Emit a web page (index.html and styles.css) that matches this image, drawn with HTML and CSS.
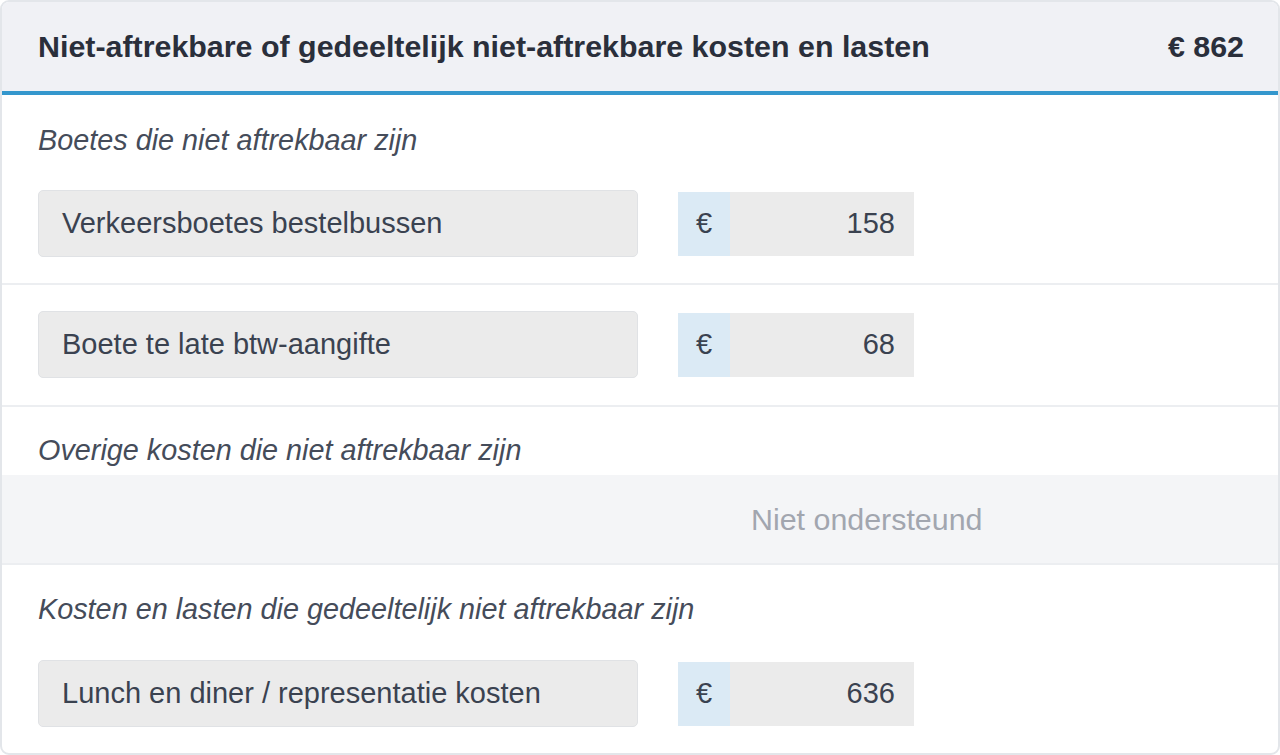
FILE: index.html
```html
<!DOCTYPE html>
<html lang="nl">
<head>
<meta charset="utf-8">
<title>Niet-aftrekbare kosten</title>
<link rel="stylesheet" href="styles.css">
</head>
<body>
<div class="card">
  <div class="card-header">
    <h1 class="title">Niet-aftrekbare of gedeeltelijk niet-aftrekbare kosten en lasten</h1>
    <span class="total">€ 862</span>
  </div>

  <section class="section">
    <div class="label label-first">Boetes die niet aftrekbaar zijn</div>
    <div class="row">
      <div class="field">Verkeersboetes bestelbussen</div>
      <div class="amount"><span class="cur">€</span><span class="val">158</span></div>
    </div>
    <div class="row">
      <div class="field">Boete te late btw-aangifte</div>
      <div class="amount"><span class="cur">€</span><span class="val">68</span></div>
    </div>
  </section>

  <section class="section">
    <div class="label label-second">Overige kosten die niet aftrekbaar zijn</div>
    <div class="unsupported">Niet ondersteund</div>
  </section>

  <section class="section last">
    <div class="label label-third">Kosten en lasten die gedeeltelijk niet aftrekbaar zijn</div>
    <div class="row row-last">
      <div class="field">Lunch en diner / representatie kosten</div>
      <div class="amount"><span class="cur">€</span><span class="val">636</span></div>
    </div>
  </section>
</div>
</body>
</html>
```

FILE: styles.css
```css
* { box-sizing: border-box; }

html, body {
  margin: 0;
  padding: 0;
  background: #ffffff;
}

body {
  font-family: "Liberation Sans", Arial, Helvetica, sans-serif;
  color: #3a4250;
  width: 1280px;
  height: 755px;
  overflow: hidden;
}

.card {
  width: 1280px;
  height: 755px;
  border: 2px solid #e3e6ea;
  border-radius: 9px;
  overflow: hidden;
  background: #ffffff;
  display: flex;
  flex-direction: column;
}

.card-header {
  height: 93px;
  background: #f0f1f5;
  border-bottom: 4px solid #3497cd;
  display: flex;
  align-items: center;
  justify-content: space-between;
  padding: 0 34px 0 36px;
}

.title {
  margin: 0;
  font-size: 30.4px;
  font-weight: 700;
  color: #2a2f3b;
  line-height: 1;
}

.total {
  font-size: 30.4px;
  font-weight: 700;
  color: #2a2f3b;
  line-height: 1;
}

.section {
  border-bottom: 2px solid #eceef1;
}

.section.last {
  border-bottom: none;
}

.label {
  font-style: italic;
  font-size: 28.8px;
  line-height: 38px;
  color: #454c5a;
  padding: 0 36px;
}

.label-first { padding-top: 26px; padding-bottom: 5px; }
.label-second { padding-top: 24px; padding-bottom: 6px; }
.label-third { padding-top: 25px; padding-bottom: 6px; }

.row {
  display: flex;
  align-items: center;
  gap: 40px;
  padding: 26px 36px 26px;
}

.row + .row {
  border-top: 2px solid #eceef1;
  padding-bottom: 27px;
}

.row-last {
  padding-bottom: 24px;
}

.field {
  width: 600px;
  height: 67px;
  background: #ebebeb;
  border: 1px solid #e0e2e5;
  border-radius: 5px;
  display: flex;
  align-items: center;
  padding-left: 23px;
  font-size: 29px;
  color: #3a4250;
}

.amount {
  width: 236px;
  height: 64px;
  display: flex;
  background: #ebebeb;
  font-size: 29px;
  color: #3a4250;
}

.cur {
  width: 52px;
  background: #dbeaf5;
  display: flex;
  align-items: center;
  justify-content: center;
}

.val {
  flex: 1;
  display: flex;
  align-items: center;
  justify-content: flex-end;
  padding-right: 19px;
}

.unsupported {
  height: 88px;
  background: #f4f5f7;
  display: flex;
  align-items: center;
  padding-left: 749px;
  font-size: 30.4px;
  color: #a2a6af;
}
```
